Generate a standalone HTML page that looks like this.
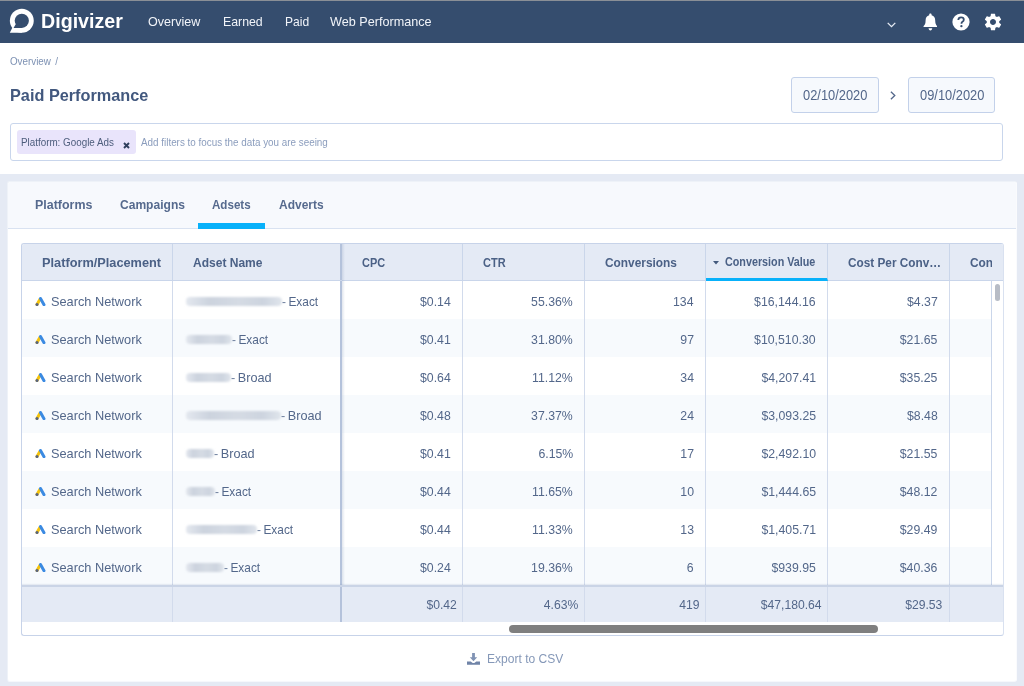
<!DOCTYPE html>
<html lang="en">
<head>
<meta charset="utf-8">
<title>Digivizer - Paid Performance</title>
<style>
*{box-sizing:border-box;margin:0;padding:0}
html,body{width:1024px;height:686px;overflow:hidden}
body{position:relative;background:#e5eaf4;font-family:"Liberation Sans",sans-serif;color:#53678a;font-size:13.500px;line-height:1}
/* every text run is an inline-block squeezed horizontally so Liberation Sans
   takes the same room as the narrower original face */
.x{display:inline-block;white-space:nowrap;line-height:1;transform:scaleX(var(--k,.966));transform-origin:0 50%}
.x.r{transform-origin:100% 50%}
.t{position:absolute}

/* ---------- top navigation ---------- */
#nav{position:absolute;left:0;top:0;width:1024px;height:43px;background:#354d6e;border-top:1px solid #8a8f96}
#nav .brand{left:41px;top:8.600px;font-size:21px;font-weight:bold;color:#fff;--k:.935}
#nav .lnk{top:14.200px;font-size:13.400px;color:#f1f4f9;--k:.937}
#nav svg{position:absolute}

/* ---------- page header ---------- */
#head{position:absolute;left:0;top:43px;width:1024px;height:131px;background:#fff}
.crumb{left:10px;top:55.700px;font-size:10.9px;color:#7d91b3;word-spacing:2px;--k:.9}
.title{left:10px;top:88px;font-size:16.7px;font-weight:bold;color:#42587e;--k:.975}
.date{position:absolute;top:77px;width:88px;height:36px;border:1px solid #c3d1ea;border-radius:3px;background:#f6f9fd;font-size:13.8px;color:#53678a}
.date .x{position:absolute;left:10.500px;top:11px;--k:.932}
.gt{position:absolute;left:890px;top:91px}
.filter{position:absolute;left:10px;top:123px;width:993px;height:38px;border:1px solid #c9d6ec;border-radius:3px;background:#fff}
.chip{position:absolute;left:6px;top:6px;width:119px;height:24px;border-radius:3px;background:#e9e4fb}
.chip .x{position:absolute;left:4px;top:7px;font-size:10.9px;color:#4d5d7c;--k:.903}
.chip svg{position:absolute;left:106.300px;top:11.700px}
.ph{left:130px;top:13px;font-size:10.9px;color:#8b9dbd;--k:.905}

/* ---------- card ---------- */
#card{position:absolute;left:7px;top:181px;width:1010px;height:501px;background:#fff;border:1px solid #eef2f8;border-right-color:#fafbfd;border-bottom-color:#f6f8fc;border-radius:3px;overflow:hidden}
#tabs{position:absolute;left:0;top:0;width:1008px;height:47px;background:#f7f9fd;border-bottom:1px solid #d9e2f1}
#tabs .x{position:absolute;top:16px;font-size:13.4px;font-weight:bold;color:#566a8e;--k:.91}
#tabs .bar{position:absolute;left:190.300px;top:41.400px;width:66.500px;height:5.200px;background:#08b1fa}

/* ---------- data grid ---------- */
#grid{position:absolute;left:13px;top:61px;width:983px;height:393px;border:1px solid #c7d3e9;border-right-color:#d9e1f0;border-radius:3px;background:#fff;overflow:hidden}
.hrow,.row,.frow{position:absolute;left:0;width:981px;display:flex}
.hrow{top:0;height:37px;background:#e4eaf5;border-bottom:1px solid #c9d5ea;font-weight:bold;font-size:13.7px;color:#4b6186}
.c{position:relative;flex:none;height:100%;border-right:1px solid #cad6ea}
.c1{width:151px}
.c2{width:169px;border-right:2px solid #b4c2db}
.pin{position:absolute;left:320px;top:0;width:3px;height:378px;background:linear-gradient(90deg,rgba(120,140,175,.22),rgba(120,140,175,0))}
.n{width:122px}
.n1,.n3{width:121px}
.last{flex:1;border-right:0}
.hrow .x{position:absolute;left:20px;top:12px;--k:.932}
.hrow .clip{position:absolute;left:0;top:0;width:42px;height:100%;overflow:hidden}
.hrow .sorted{border-bottom:3px solid #08b1fa;height:37px;z-index:2}
.hrow .sorted .x{font-size:12px;left:19px;top:12px}
#body{position:absolute;left:0;top:37px;width:981px;height:304px}
.row{height:38px;position:relative;background:#fff}
.row .c,.frow .c{border-right-color:#d2dbec}
.row .c2,.frow .c2{border-right-color:#b4c2db}
.row.alt{background:#f7fafd}
.row .c1 .x{position:absolute;left:29px;top:13.500px;--k:.945}
.row .c1 .ga{position:absolute;left:13px;top:16.400px}
.row .c2{display:flex;align-items:flex-start;padding:13.500px 0 0 13px}
.blur{display:block;height:9px;border-radius:4px;background:linear-gradient(90deg,#e4e8ef,#ccd3de 25%,#d5dbe4 55%,#cdd4df 80%,#e0e5ec);filter:blur(1.2px);margin:2.300px 0 0 0}
.row .n .x{position:absolute;right:11px;top:13.500px;--k:.91}
.row .c2 .x{word-spacing:-1px;--k:.881}
.row .c2 .x.w{--k:.939}
.hy{color:#6f819f}
.n5 .x{margin-right:.700px}
.vscroll{position:absolute;left:969px;top:37px;width:12px;height:304px;background:#fff;border-left:1px solid #cad6ea}
.vscroll i{position:absolute;left:3px;top:3.400px;width:5px;height:17px;border-radius:3px;background:#b7bcc6}
.frow{top:341px;height:37px;background:#e4eaf5;border-top:2px solid #cad4e6;box-shadow:0 -1px 1px rgba(120,140,175,.14)}
.frow .n .x{position:absolute;right:5.700px;top:11px;--k:.9}
.hscroll{position:absolute;left:487px;top:380.600px;width:369px;height:8.600px;border-radius:5px;background:#7f7f7f}
.export{position:absolute;left:0;top:470px;width:1008px;height:16px;color:#8598b8}
.export .x{position:absolute;left:479px;top:-.300px;--k:.892}
.export svg{position:absolute;left:458.800px;top:1.200px}
</style>
</head>
<body>

<div id="nav">
  <svg style="left:9px;top:7px" width="26" height="26" viewBox="0 0 26 26"><circle cx="12.800" cy="12.800" r="11.950" fill="#fff"/><path d="M.85 24.750 3.200 20 12.800 14V24.750z" fill="#fff"/><circle cx="12.800" cy="12.800" r="7.100" fill="#354d6e"/><path d="M4.600 19.900 6.700 16.200 12.800 13V19.900z" fill="#354d6e"/></svg>
  <span class="t x brand">Digivizer</span>
  <span class="t x lnk" style="left:148px">Overview</span>
  <span class="t x lnk" style="left:222.500px;--k:.92">Earned</span>
  <span class="t x lnk" style="left:284.700px;--k:.9">Paid</span>
  <span class="t x lnk" style="left:330.300px;--k:.943">Web Performance</span>
  <svg style="left:887.300px;top:20.500px" width="9" height="6" viewBox="0 0 9 6"><path d="M.7.9 4.5 4.6 8.3.9" fill="none" stroke="#e8edf5" stroke-width="1.3"/></svg>
  <svg style="left:922.700px;top:12px" width="14.800" height="18" viewBox="0 0 16 18" preserveAspectRatio="none"><path d="M8 0.6c.8 0 1.3.5 1.3 1.2v.5c2.500.600 3.900 2.500 3.900 5.200 0 2.900.700 4.400 2.100 5.600.3.300.2 1-.4 1H1.100c-.6 0-.7-.7-.4-1C2.100 11.900 2.800 10.400 2.800 7.500c0-2.700 1.400-4.600 3.900-5.200v-.5C6.700 1.100 7.200.6 8 .6zM6 15.300h4c0 1.200-.9 2.100-2 2.100s-2-.9-2-2.100z" fill="#fff"/></svg>
  <svg style="left:952px;top:12px" width="18" height="18" viewBox="0 0 18 18"><circle cx="9" cy="9" r="8.600" fill="#fff"/><path d="M6.300 7c.1-1.600 1.200-2.600 2.800-2.600 1.600 0 2.700 1 2.700 2.300 0 1-.5 1.600-1.300 2.100-.8.500-1 .8-1 1.500v.4" fill="none" stroke="#354d6e" stroke-width="1.800"/><circle cx="9.400" cy="13.200" r="1.150" fill="#354d6e"/></svg>
  <svg style="left:982.700px;top:11px" width="20" height="20" viewBox="0 0 24 24"><path fill="#fff" d="M19.430 12.980c.040-.320.070-.640.070-.980s-.030-.660-.070-.980l2.110-1.650c.190-.150.240-.420.120-.640l-2-3.460c-.120-.220-.390-.300-.610-.220l-2.490 1c-.520-.400-1.080-.730-1.690-.980l-.380-2.650A.488.488 0 0 0 14 2h-4c-.250 0-.460.180-.490.420l-.380 2.650c-.610.250-1.170.590-1.690.980l-2.490-1c-.230-.090-.490 0-.610.220l-2 3.460c-.130.220-.070.490.120.640l2.110 1.650c-.040.320-.070.650-.070.980s.030.660.070.980l-2.110 1.650c-.190.150-.240.420-.120.640l2 3.460c.120.220.390.300.610.220l2.490-1c.520.400 1.080.730 1.690.980l.380 2.650c.030.240.240.420.490.420h4c.250 0 .460-.180.490-.420l.380-2.650c.610-.250 1.170-.590 1.690-.980l2.490 1c.230.090.490 0 .610-.220l2-3.460c.120-.220.070-.490-.120-.640l-2.110-1.650zM12 15.600c-1.980 0-3.600-1.620-3.600-3.600s1.620-3.600 3.600-3.600 3.600 1.620 3.600 3.600-1.620 3.600-3.600 3.600z"/></svg>
</div>

<div id="head"></div>
<span class="t x crumb">Overview /</span>
<span class="t x title">Paid Performance</span>
<div class="date" style="left:791px"><span class="x">02/10/2020</span></div>
<svg class="gt" width="6" height="9" viewBox="0 0 6 9"><path d="M.9.700 4.800 4.500.9 8.300" fill="none" stroke="#53678a" stroke-width="1.300"/></svg>
<div class="date" style="left:908px;width:87px"><span class="x">09/10/2020</span></div>
<div class="filter">
  <div class="chip"><span class="x">Platform: Google Ads</span>
    <svg width="7" height="7" viewBox="0 0 7 7"><path d="M1 1 6 6M6 1 1 6" stroke="#2f3f5c" stroke-width="1.900"/></svg>
  </div>
  <span class="t x ph">Add filters to focus the data you are seeing</span>
</div>

<div id="card">
  <div id="tabs">
    <span class="x" style="left:27px;--k:.93">Platforms</span>
    <span class="x" style="left:112px;--k:.9">Campaigns</span>
    <span class="x" style="left:203.800px;--k:.865">Adsets</span>
    <span class="x" style="left:270.500px;--k:.895">Adverts</span>
    <div class="bar"></div>
  </div>

  <div id="grid">
    <div class="hrow">
      <div class="c c1"><span class="x">Platform/Placement</span></div>
      <div class="c c2"><span class="x" style="--k:.878">Adset Name</span></div>
      <div class="c n n1"><span class="x" style="--k:.8">CPC</span></div>
      <div class="c n"><span class="x" style="--k:.804">CTR</span></div>
      <div class="c n n3"><span class="x" style="--k:.867">Conversions</span></div>
      <div class="c n sorted"><svg style="position:absolute;left:7px;top:16.500px" width="6" height="4" viewBox="0 0 6 4"><path d="M0 0h6L3 3.600z" fill="#435a7d"/></svg><span class="x" style="--k:.897">Conversion Value</span></div>
      <div class="c n"><span class="x" style="--k:.861">Cost Per Conv…</span></div>
      <div class="c last"><div class="clip"><span class="x" style="--k:.867">Conversion Rate</span></div></div>
    </div>
    <div id="body">
    <div class="row">
      <div class="c c1"><svg class="ga" viewBox="0 0 22 18" width="11" height="9"><path d="M8.2 1.6 L1.4 13.4 a3 3 0 0 0 5.2 3 L13.4 4.6z" fill="#f6c30a"/><path d="M8.4 3.1 a3 3 0 0 1 5.2 -3 L20.6 12.4 a3 3 0 0 1 -5.2 3z" fill="#3b8ae2" transform="translate(0,1.5)"/><circle cx="4" cy="14.9" r="3" fill="#566381"/></svg><span class="x">Search Network</span></div>
      <div class="c c2"><i class="blur" style="width:95.8px"></i><span class="x"><span class="hy">-</span> Exact</span></div>
      <div class="c n n1"><span class="x r">$0.14</span></div>
      <div class="c n"><span class="x r">55.36%</span></div>
      <div class="c n n3"><span class="x r">134</span></div>
      <div class="c n n4"><span class="x r">$16,144.16</span></div>
      <div class="c n n5"><span class="x r">$4.37</span></div>
      <div class="c last"></div>
    </div>
    <div class="row alt">
      <div class="c c1"><svg class="ga" viewBox="0 0 22 18" width="11" height="9"><path d="M8.2 1.6 L1.4 13.4 a3 3 0 0 0 5.2 3 L13.4 4.6z" fill="#f6c30a"/><path d="M8.4 3.1 a3 3 0 0 1 5.2 -3 L20.6 12.4 a3 3 0 0 1 -5.2 3z" fill="#3b8ae2" transform="translate(0,1.5)"/><circle cx="4" cy="14.9" r="3" fill="#566381"/></svg><span class="x">Search Network</span></div>
      <div class="c c2"><i class="blur" style="width:45.9px"></i><span class="x"><span class="hy">-</span> Exact</span></div>
      <div class="c n n1"><span class="x r">$0.41</span></div>
      <div class="c n"><span class="x r">31.80%</span></div>
      <div class="c n n3"><span class="x r">97</span></div>
      <div class="c n n4"><span class="x r">$10,510.30</span></div>
      <div class="c n n5"><span class="x r">$21.65</span></div>
      <div class="c last"></div>
    </div>
    <div class="row">
      <div class="c c1"><svg class="ga" viewBox="0 0 22 18" width="11" height="9"><path d="M8.2 1.6 L1.4 13.4 a3 3 0 0 0 5.2 3 L13.4 4.6z" fill="#f6c30a"/><path d="M8.4 3.1 a3 3 0 0 1 5.2 -3 L20.6 12.4 a3 3 0 0 1 -5.2 3z" fill="#3b8ae2" transform="translate(0,1.5)"/><circle cx="4" cy="14.9" r="3" fill="#566381"/></svg><span class="x">Search Network</span></div>
      <div class="c c2"><i class="blur" style="width:45.1px"></i><span class="x w"><span class="hy">-</span> Broad</span></div>
      <div class="c n n1"><span class="x r">$0.64</span></div>
      <div class="c n"><span class="x r">11.12%</span></div>
      <div class="c n n3"><span class="x r">34</span></div>
      <div class="c n n4"><span class="x r">$4,207.41</span></div>
      <div class="c n n5"><span class="x r">$35.25</span></div>
      <div class="c last"></div>
    </div>
    <div class="row alt">
      <div class="c c1"><svg class="ga" viewBox="0 0 22 18" width="11" height="9"><path d="M8.2 1.6 L1.4 13.4 a3 3 0 0 0 5.2 3 L13.4 4.6z" fill="#f6c30a"/><path d="M8.4 3.1 a3 3 0 0 1 5.2 -3 L20.6 12.4 a3 3 0 0 1 -5.2 3z" fill="#3b8ae2" transform="translate(0,1.5)"/><circle cx="4" cy="14.9" r="3" fill="#566381"/></svg><span class="x">Search Network</span></div>
      <div class="c c2"><i class="blur" style="width:94.7px"></i><span class="x w"><span class="hy">-</span> Broad</span></div>
      <div class="c n n1"><span class="x r">$0.48</span></div>
      <div class="c n"><span class="x r">37.37%</span></div>
      <div class="c n n3"><span class="x r">24</span></div>
      <div class="c n n4"><span class="x r">$3,093.25</span></div>
      <div class="c n n5"><span class="x r">$8.48</span></div>
      <div class="c last"></div>
    </div>
    <div class="row">
      <div class="c c1"><svg class="ga" viewBox="0 0 22 18" width="11" height="9"><path d="M8.2 1.6 L1.4 13.4 a3 3 0 0 0 5.2 3 L13.4 4.6z" fill="#f6c30a"/><path d="M8.4 3.1 a3 3 0 0 1 5.2 -3 L20.6 12.4 a3 3 0 0 1 -5.2 3z" fill="#3b8ae2" transform="translate(0,1.5)"/><circle cx="4" cy="14.9" r="3" fill="#566381"/></svg><span class="x">Search Network</span></div>
      <div class="c c2"><i class="blur" style="width:27.8px"></i><span class="x w"><span class="hy">-</span> Broad</span></div>
      <div class="c n n1"><span class="x r">$0.41</span></div>
      <div class="c n"><span class="x r">6.15%</span></div>
      <div class="c n n3"><span class="x r">17</span></div>
      <div class="c n n4"><span class="x r">$2,492.10</span></div>
      <div class="c n n5"><span class="x r">$21.55</span></div>
      <div class="c last"></div>
    </div>
    <div class="row alt">
      <div class="c c1"><svg class="ga" viewBox="0 0 22 18" width="11" height="9"><path d="M8.2 1.6 L1.4 13.4 a3 3 0 0 0 5.2 3 L13.4 4.6z" fill="#f6c30a"/><path d="M8.4 3.1 a3 3 0 0 1 5.2 -3 L20.6 12.4 a3 3 0 0 1 -5.2 3z" fill="#3b8ae2" transform="translate(0,1.5)"/><circle cx="4" cy="14.9" r="3" fill="#566381"/></svg><span class="x">Search Network</span></div>
      <div class="c c2"><i class="blur" style="width:28.6px"></i><span class="x"><span class="hy">-</span> Exact</span></div>
      <div class="c n n1"><span class="x r">$0.44</span></div>
      <div class="c n"><span class="x r">11.65%</span></div>
      <div class="c n n3"><span class="x r">10</span></div>
      <div class="c n n4"><span class="x r">$1,444.65</span></div>
      <div class="c n n5"><span class="x r">$48.12</span></div>
      <div class="c last"></div>
    </div>
    <div class="row">
      <div class="c c1"><svg class="ga" viewBox="0 0 22 18" width="11" height="9"><path d="M8.2 1.6 L1.4 13.4 a3 3 0 0 0 5.2 3 L13.4 4.6z" fill="#f6c30a"/><path d="M8.4 3.1 a3 3 0 0 1 5.2 -3 L20.6 12.4 a3 3 0 0 1 -5.2 3z" fill="#3b8ae2" transform="translate(0,1.5)"/><circle cx="4" cy="14.9" r="3" fill="#566381"/></svg><span class="x">Search Network</span></div>
      <div class="c c2"><i class="blur" style="width:70.9px"></i><span class="x"><span class="hy">-</span> Exact</span></div>
      <div class="c n n1"><span class="x r">$0.44</span></div>
      <div class="c n"><span class="x r">11.33%</span></div>
      <div class="c n n3"><span class="x r">13</span></div>
      <div class="c n n4"><span class="x r">$1,405.71</span></div>
      <div class="c n n5"><span class="x r">$29.49</span></div>
      <div class="c last"></div>
    </div>
    <div class="row alt">
      <div class="c c1"><svg class="ga" viewBox="0 0 22 18" width="11" height="9"><path d="M8.2 1.6 L1.4 13.4 a3 3 0 0 0 5.2 3 L13.4 4.6z" fill="#f6c30a"/><path d="M8.4 3.1 a3 3 0 0 1 5.2 -3 L20.6 12.4 a3 3 0 0 1 -5.2 3z" fill="#3b8ae2" transform="translate(0,1.5)"/><circle cx="4" cy="14.9" r="3" fill="#566381"/></svg><span class="x">Search Network</span></div>
      <div class="c c2"><i class="blur" style="width:38.3px"></i><span class="x"><span class="hy">-</span> Exact</span></div>
      <div class="c n n1"><span class="x r">$0.24</span></div>
      <div class="c n"><span class="x r">19.36%</span></div>
      <div class="c n n3"><span class="x r">6</span></div>
      <div class="c n n4"><span class="x r">$939.95</span></div>
      <div class="c n n5"><span class="x r">$40.36</span></div>
      <div class="c last"></div>
    </div>
    </div>
    <div class="pin"></div>
    <div class="vscroll"><i></i></div>
    <div class="frow">
      <div class="c c1"></div>
      <div class="c c2"></div>
      <div class="c n n1"><span class="x r">$0.42</span></div>
      <div class="c n n2"><span class="x r">4.63%</span></div>
      <div class="c n n3"><span class="x r">419</span></div>
      <div class="c n n4"><span class="x r">$47,180.64</span></div>
      <div class="c n n5"><span class="x r">$29.53</span></div>
      <div class="c last"></div>
    </div>
    <div class="hscroll"></div>
  </div>

  <div class="export">
    <svg width="13" height="12" viewBox="0 0 13 12"><path d="M5.100 0h2.800v4.300h2.300L6.500 8.200 2.800 4.300h2.300z" fill="#8093b4"/><path d="M0 8.600h3.700l2 1.500h1.600l2-1.500H13v3.100H0z" fill="#7084a8"/></svg>
    <span class="x">Export to CSV</span>
  </div>
</div>

</body>
</html>
